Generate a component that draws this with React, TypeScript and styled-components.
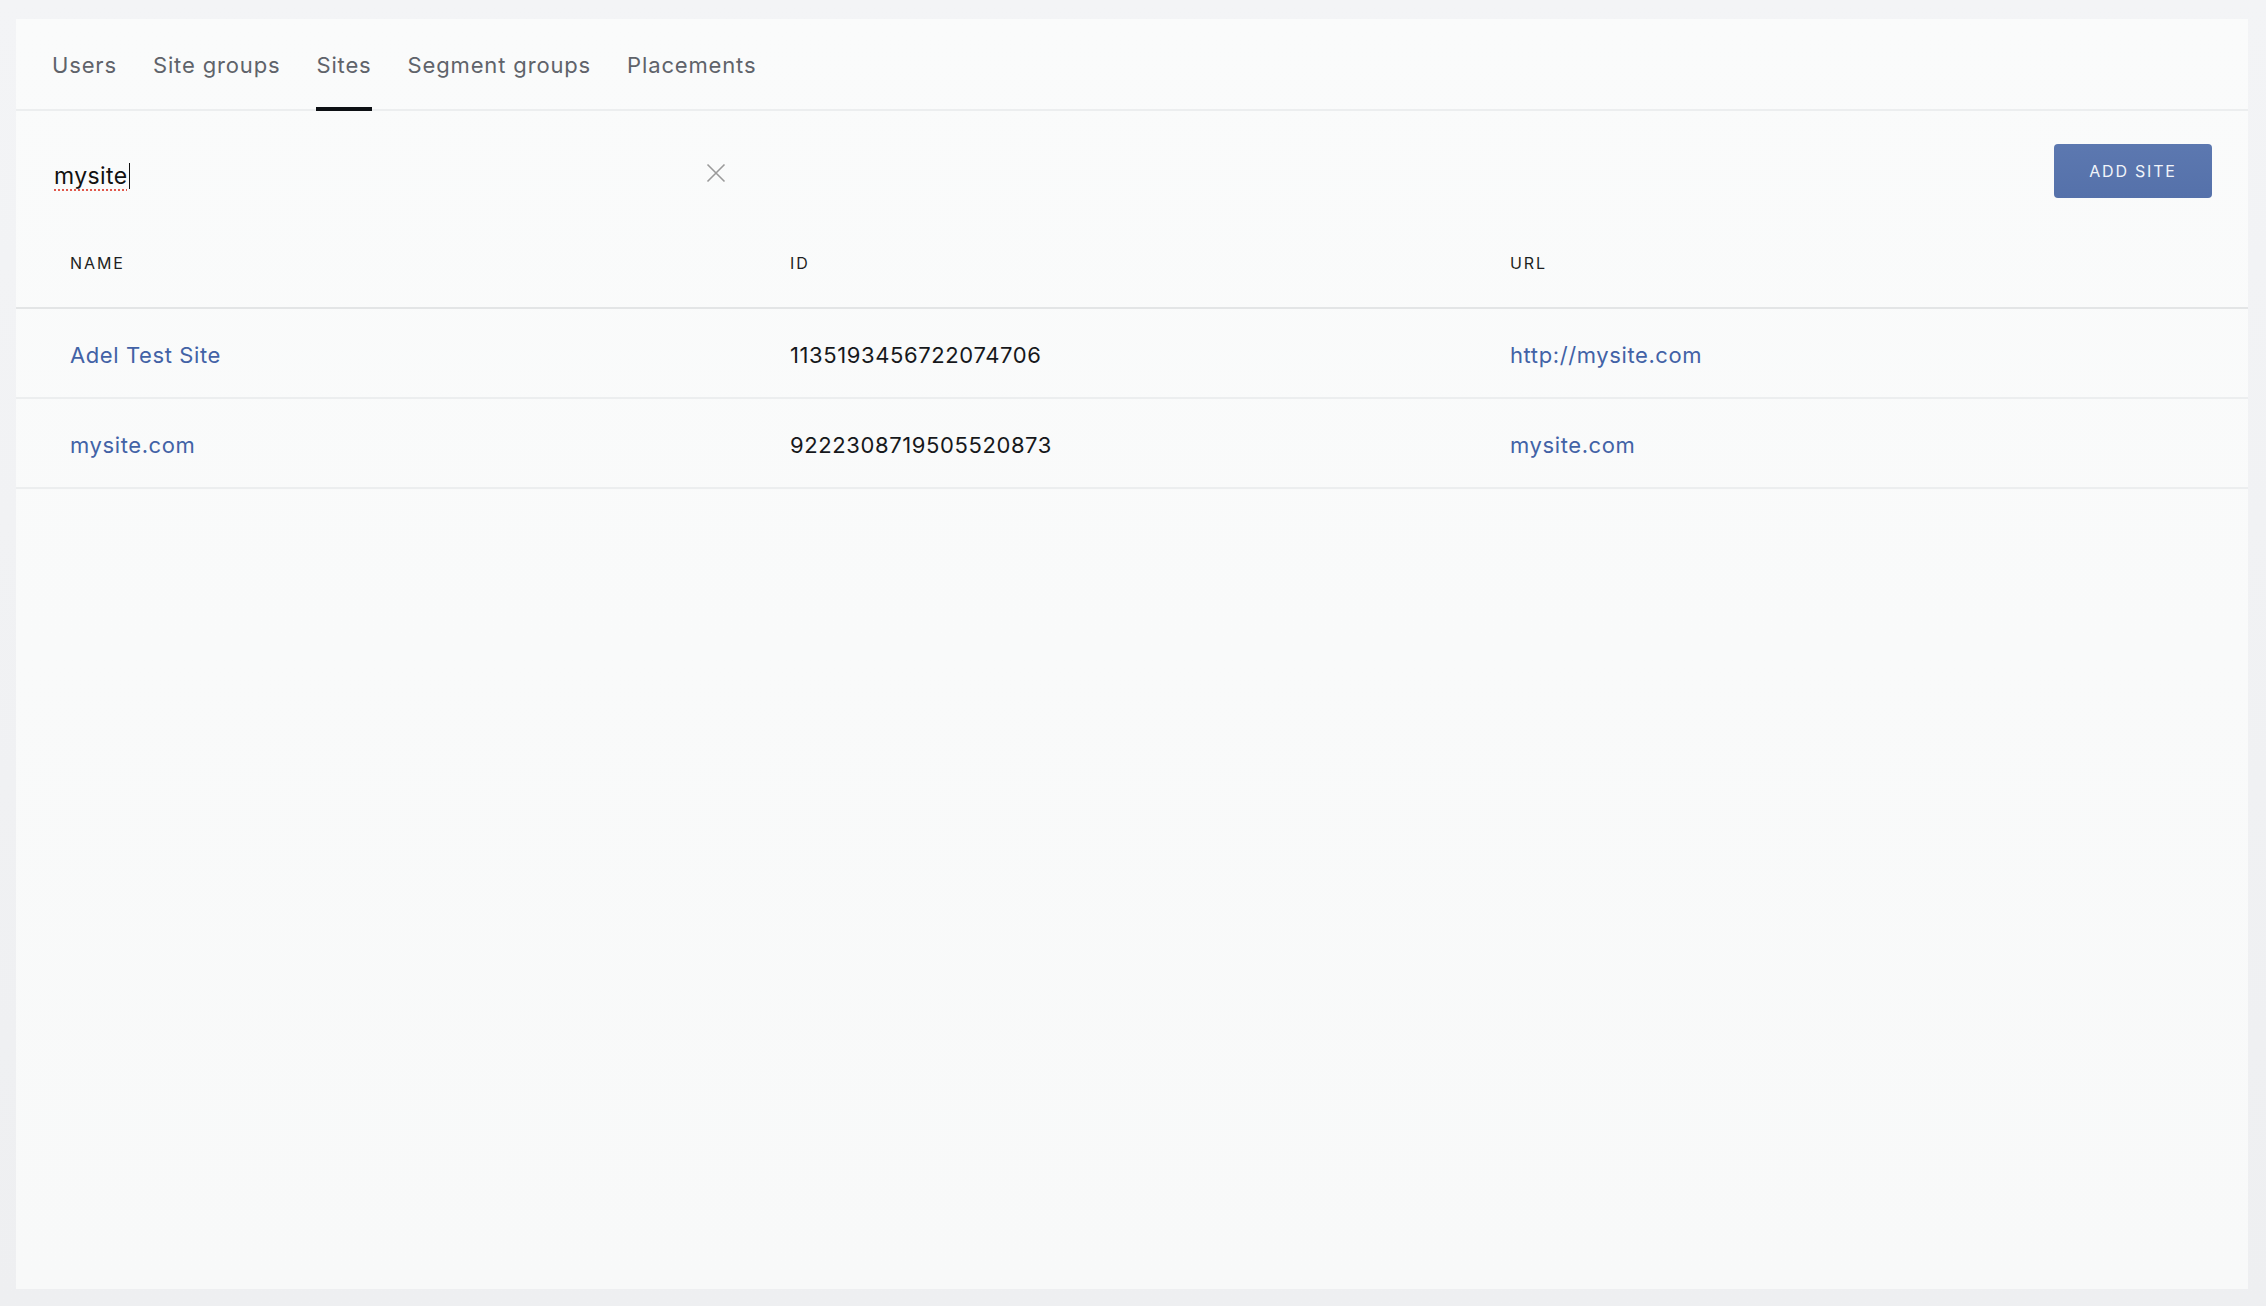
import styled, { createGlobalStyle } from 'styled-components';

const GlobalStyle = createGlobalStyle`
  html, body {
    margin: 0;
    padding: 0;
    background: #f3f4f6;
    font-family: Inter, "Open Sans", sans-serif;
  }
  * {
    box-sizing: border-box;
  }
`

const tabs = ['Users', 'Site groups', 'Sites', 'Segment groups', 'Placements'];

const sites = [
  { name: 'Adel Test Site', id: '1135193456722074706', url: 'http://mysite.com' },
  { name: 'mysite.com', id: '9222308719505520873', url: 'mysite.com' },
];

const App = () => {
  return (
    <Page>
      <GlobalStyle />
      <Card>
        <TabBar>
          {tabs.map(t => (
            <Tab key={t} active={t === 'Sites'}>{t}</Tab>
          ))}
        </TabBar>

        <Toolbar>
          <SearchField>
            <SearchText>
              <Misspelled>mysite</Misspelled>
              <Caret />
            </SearchText>
            <ClearButton aria-label="clear">
              <svg width="20" height="20" viewBox="0 0 20 20">
                <path d="M1.5 1.5 L18.5 18.5 M18.5 1.5 L1.5 18.5" stroke="#9a9a9a" strokeWidth="1.6" fill="none" />
              </svg>
            </ClearButton>
          </SearchField>
          <AddButton>Add site</AddButton>
        </Toolbar>

        <Table>
          <HeaderRow>
            <HeadCell>Name</HeadCell>
            <HeadCell>ID</HeadCell>
            <HeadCell>URL</HeadCell>
          </HeaderRow>
          {sites.map(s => (
            <Row key={s.id}>
              <Cell><Link>{s.name}</Link></Cell>
              <Cell>{s.id}</Cell>
              <Cell><Link>{s.url}</Link></Cell>
            </Row>
          ))}
        </Table>
      </Card>
    </Page>
  )
}

export default App;

const Page = styled.div`
  height: 1306px;
  padding: 19px 18px 17px 16px;
  background: linear-gradient(180deg, #f3f4f6 0%, #eeeff1 100%);
`

const Card = styled.div`
  height: 100%;
  background: linear-gradient(180deg, #fafbfb 0%, #f8f9f9 100%);
  display: flex;
  flex-direction: column;
`

const TabBar = styled.div`
  display: flex;
  align-items: stretch;
  gap: 36px;
  height: 92px;
  padding-left: 36px;
  border-bottom: 2px solid #eceeef;
`

const Tab = styled.div<{ active?: boolean }>`
  display: flex;
  align-items: center;
  padding-top: 3px;
  font-size: 22px;
  letter-spacing: 0.85px;
  color: #5f636a;
  border-bottom: 4px solid ${props => props.active ? '#0d1014' : 'transparent'};
  margin-bottom: -2px;
`

const Toolbar = styled.div`
  display: flex;
  align-items: flex-start;
  justify-content: space-between;
  padding: 33px 36px 0 38px;
  height: 107px;
`

const SearchField = styled.div`
  display: flex;
  align-items: center;
  justify-content: space-between;
  width: 672px;
  height: 54px;
  padding-top: 4px;
`

const SearchText = styled.div`
  display: flex;
  align-items: center;
  font-size: 23px;
  letter-spacing: 0.4px;
  color: #111;
  padding-top: 6px;
`

const Misspelled = styled.span`
  text-decoration: underline dotted #e0584c;
  text-decoration-thickness: 2px;
  text-underline-offset: 5px;
`

const Caret = styled.span`
  display: inline-block;
  width: 1.5px;
  height: 26px;
  background: #111;
  margin-left: 1px;
`

const ClearButton = styled.div`
  display: flex;
  align-items: center;
  justify-content: center;
  width: 20px;
  height: 20px;
`

const AddButton = styled.button`
  width: 158px;
  height: 54px;
  border: none;
  border-radius: 4px;
  background: linear-gradient(180deg, #5c78b0 0%, #5571aa 100%);
  color: #f1f4fa;
  font-family: Inter, sans-serif;
  font-size: 16px;
  letter-spacing: 1.8px;
  text-transform: uppercase;
  cursor: pointer;
`

const Table = styled.div`
  display: flex;
  flex-direction: column;
`

const HeaderRow = styled.div`
  display: grid;
  grid-template-columns: 720px 720px 1fr;
  align-items: center;
  height: 91px;
  border-bottom: 2px solid #e3e5e6;
`

const HeadCell = styled.div`
  padding-left: 54px;
  font-size: 16px;
  letter-spacing: 1.9px;
  text-transform: uppercase;
  color: #1d1f22;
  font-weight: 400;
`

const Row = styled.div`
  display: grid;
  grid-template-columns: 720px 720px 1fr;
  align-items: center;
  height: 90px;
  padding-top: 4px;
  border-bottom: 2px solid #eceeef;
`

const Cell = styled.div`
  padding-left: 54px;
  font-size: 22px;
  letter-spacing: 0.6px;
  color: #16181b;
`

const Link = styled.a`
  color: #4262a6;
  text-decoration: none;
  cursor: pointer;
`
